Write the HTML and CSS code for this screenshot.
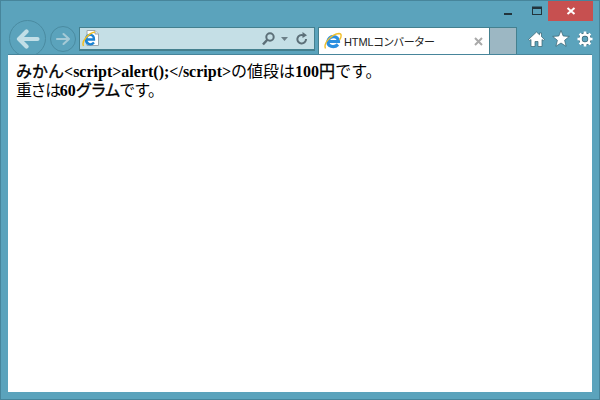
FILE: index.html
```html
<!DOCTYPE html>
<html lang="ja">
<head>
    <meta charset="UTF-8">
    <title>HTMLコンバーター</title>
    <link rel="stylesheet" href="styles.css">
</head>
<body>
    <div class="window">
        <div class="title-bar">
            <div class="win-btn min-btn">
                <svg width="10" height="10" viewBox="0 0 10 10"><rect x="1" y="7" width="8" height="2" fill="#22343c"/></svg>
            </div>
            <div class="win-btn">
                <svg width="12" height="10" viewBox="0 0 12 10"><rect x="1.5" y="1" width="9" height="7.5" fill="none" stroke="#22343c"/><rect x="1" y="1" width="10" height="2" fill="#22343c"/></svg>
            </div>
            <div class="win-btn close-btn">
                <svg width="10" height="10" viewBox="0 0 10 10"><path d="M1.5 2 L8.500 8 M8.500 2 L1.500 8" stroke="#fff" stroke-width="2"/></svg>
            </div>
        </div>
        <div class="toolbar">
            <div class="nav-btn back-btn">
                <svg width="24" height="20" viewBox="0 0 24 20"><path d="M10.500 2.500 L3 10 L10.500 17.500 M3 10 H21.500" fill="none" stroke="#c2dfe7" stroke-width="4.200" stroke-linecap="round" stroke-linejoin="round"/></svg>
            </div>
            <div class="nav-btn forward-btn">
                <svg width="16" height="14" viewBox="0 0 16 14"><path d="M8.500 2 L14 7 L8.500 12 M14 7 H2" fill="none" stroke="#a5cad6" stroke-width="2.100" stroke-linecap="round" stroke-linejoin="round"/></svg>
            </div>
            <div class="address-bar">
                <svg class="page-icon" width="18" height="18" viewBox="0 0 18 18">
                    <path d="M5 .5 H13 L16.500 4 V15.500 H5 Z" fill="#fff" stroke="#9aa8ae"/>
                    <path d="M13 .5 V4 H16.500" fill="#dfe7ea" stroke="#9aa8ae"/>
                    <path d="M4 9.500 H12 C12 3.500 5 3.500 4 9 C3.500 14 9 16 12 12.500" fill="none" stroke="#1b83d3" stroke-width="2.300"/>
                    <path d="M1.500 16 C-1 11 7 3 13 2" fill="none" stroke="#f0bd24" stroke-width="1.500"/>
                </svg>
                <div class="address-tools">
                    <svg width="13" height="14" viewBox="0 0 13 14"><circle cx="8" cy="5" r="3.700" fill="none" stroke="#5c6f78" stroke-width="2"/><path d="M5.500 7.500 L1 12.500" stroke="#5c6f78" stroke-width="2.500"/></svg>
                    <svg width="7" height="4" viewBox="0 0 7 4"><path d="M0 0 H7 L3.500 4 Z" fill="#6c7f88"/></svg>
                    <svg class="refresh" width="12" height="14" viewBox="0 0 12 14"><path d="M10 7 A4.300 4.300 0 1 1 7.500 3.300" fill="none" stroke="#5c6f78" stroke-width="2"/><path d="M6.500 0 L11 3.200 L6.500 6 Z" fill="#5c6f78"/></svg>
                </div>
            </div>
            <div class="tab">
                <svg width="18" height="18" viewBox="0 0 18 18">
                    <path d="M4 9.500 H14.500 C14.500 3 5.500 3 4 9 C3 14.500 10 16.500 14 12.500" fill="none" stroke="#2b8fe0" stroke-width="3.200"/>
                    <path d="M1.500 16.500 C-1 11 8 2 15 1.500 C18 1.500 17.500 5 15.500 8" fill="none" stroke="#f2bf2b" stroke-width="1.400"/>
                </svg>
                <span class="tab-title">HTMLコンバーター</span>
                <svg class="tab-close" width="9" height="9" viewBox="0 0 9 9"><path d="M1 1 L8 8 M8 1 L1 8" stroke="#a9a9a9" stroke-width="2"/></svg>
            </div>
            <div class="new-tab"></div>
            <div class="tool-icons">
                <svg width="17" height="16" viewBox="0 0 17 16"><path d="M8.500 1 L11.500 3.800 V2 H13.500 V5.700 L16.500 8.500 L15.200 9.500 L14 8.500 V15.500 H10 V10.500 H7 V15.500 H3 V8.500 L1.800 9.500 L.5 8.500 Z" fill="#fff" stroke="#35606f" stroke-width=".7"/></svg>
                <svg width="18" height="17" viewBox="0 0 18 17"><path d="M9 .5 L11.200 6 L17.300 6.400 L12.600 10.300 L14.100 16.300 L9 13 L3.900 16.300 L5.400 10.300 L.7 6.400 L6.800 6 Z" fill="#fff" stroke="#35606f" stroke-width=".7"/></svg>
                <svg width="16" height="16" viewBox="0 0 16 16"><circle cx="8" cy="8" r="4.500" fill="none" stroke="#35606f" stroke-width="3.800"/><circle cx="8" cy="8" r="4.500" fill="none" stroke="#fff" stroke-width="2.600"/><path d="M8 .5 V15.500 M.5 8 H15.500 M2.700 2.700 L13.300 13.300 M13.300 2.700 L2.700 13.300" stroke="#fff" stroke-width="2.600" stroke-dasharray="3 9"/></svg>
            </div>
        </div>
        <div class="content">
            <span class="heavy">みかん</span><b>&lt;script&gt;alert();&lt;/script&gt;</b>の値段は<b>100</b><span class="heavy">円</span>です。<br>
            <span class="tight">重さは</span><b>60</b><span class="heavy tight">グラム</span><span class="tail">です。</span>
        </div>
    </div>
</body>
</html>
```
FILE: styles.css
```css
* {
    margin: 0;
    padding: 0;
    box-sizing: border-box;
}

body {
    width: 600px;
    height: 400px;
    overflow: hidden;
}

.window {
    height: 400px;
    background: #5ba3bc;
    border: 1px solid #47859b;
    display: flex;
    flex-direction: column;
}

.title-bar {
    height: 26px;
    flex-shrink: 0;
    display: flex;
    justify-content: flex-end;
    align-items: flex-start;
    padding-right: 6px;
}

.win-btn {
    width: 23px;
    height: 20px;
    display: flex;
    align-items: center;
    justify-content: center;
}

.min-btn {
    margin-right: 6px;
}

.close-btn {
    width: 45px;
    background: #c75050;
}

.toolbar {
    height: 27px;
    flex-shrink: 0;
    display: flex;
    align-items: flex-start;
}

.nav-btn {
    border: 1px solid #4a8ba1;
    border-radius: 50%;
    display: flex;
    align-items: center;
    justify-content: center;
    flex-shrink: 0;
}

.back-btn {
    width: 37px;
    height: 37px;
    margin: -7px 0 0 8px;
}

.forward-btn {
    width: 26px;
    height: 26px;
    margin: -1px 0 0 4px;
}

.address-bar {
    width: 236px;
    height: 24px;
    margin-left: 3px;
    background: #c5dfe6;
    border: 1px solid #44808f;
    border-bottom-width: 2px;
    display: flex;
    align-items: center;
    justify-content: space-between;
    padding: 0 6px 0 2px;
}

.address-tools {
    display: flex;
    align-items: center;
    gap: 6px;
}

.refresh {
    margin-left: 2px;
}

.tab {
    width: 172px;
    height: 27px;
    margin-left: 3px;
    background: #fff;
    border: 1px solid #44808f;
    border-bottom: none;
    display: flex;
    align-items: center;
    padding-left: 5px;
}

.tab-title {
    flex: 1;
    margin-left: 2px;
    font: 11px "Liberation Sans", "Noto Sans CJK JP", sans-serif;
    font-feature-settings: "palt";
    letter-spacing: -0.1px;
    color: #222;
}

.tab-close {
    margin-right: 6px;
}

.new-tab {
    width: 27px;
    height: 27px;
    background: #9cb7c3;
    border: 1px solid #44808f;
    border-left: none;
    border-bottom: none;
}

.tool-icons {
    display: flex;
    align-items: center;
    gap: 7px;
    margin: 3px 0 0 11px;
}

.content {
    flex: 1;
    position: relative;
    margin: 0 7px 7px;
    padding: 7px 8px;
    background: #fff;
    border-top: 1px solid #47859b;
    color: #000;
    font: 16px/19px "Liberation Serif", "Noto Sans CJK JP", serif;
}

/* fake bold like the old gothic font */
.heavy {
    -webkit-text-stroke: 0.35px #000;
}

.tight {
    letter-spacing: -1.4px;
}

.tail {
    letter-spacing: -0.8px;
}
```
